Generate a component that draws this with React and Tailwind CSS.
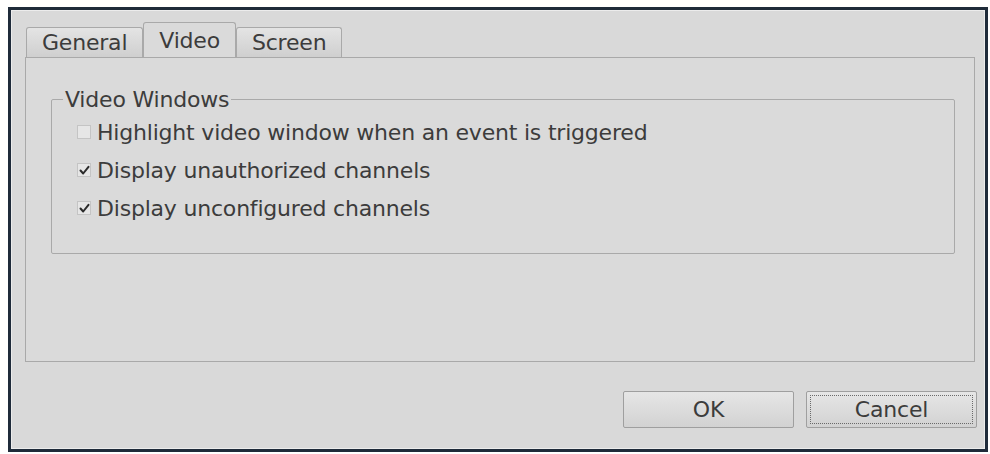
// Settings dialog with tabs: General / Video / Screen
const font = { fontFamily: '"DejaVu Sans", Verdana, sans-serif' };

function CheckBox({ checked }) {
    return (
        <span className="w-[14px] h-[14px] border border-[#c4c4c4] bg-[#e6e6e6] flex items-center justify-center shrink-0">
            {checked && (
                <svg width="11" height="11" viewBox="0 0 11 11" fill="none">
                    <path d="M1.5 5.5 L4.2 8.5 L9.5 1.8" stroke="#2b2b2b" strokeWidth="2" strokeLinecap="round" strokeLinejoin="round" />
                </svg>
            )}
        </span>
    );
}

function Option({ checked, label }) {
    return (
        <div className="flex items-center gap-[6px] h-[38px]">
            <CheckBox checked={checked} />
            <span className="text-[22px] tracking-[-0.2px] text-[#3c3c3c]">{label}</span>
        </div>
    );
}

function Tab({ label, active }) {
    return active ? (
        <div className="h-[35px] px-[15px] flex items-center bg-[#dadada] border border-b-0 border-[#a9a9a9] rounded-t-[3px] -mb-px relative z-10 text-[22px] tracking-[-0.2px] text-[#3c3c3c]">
            {label}
        </div>
    ) : (
        <div className="h-[30px] mt-[5px] px-[15px] flex items-center bg-gradient-to-b from-[#e4e4e4] to-[#cfcfcf] border border-b-0 border-[#a9a9a9] rounded-t-[3px] text-[22px] tracking-[-0.2px] text-[#3c3c3c]">
            {label}
        </div>
    );
}

function Button({ label, focused }) {
    return (
        <button className="w-[171px] h-[37px] bg-gradient-to-b from-[#e6e6e6] to-[#d2d2d2] border border-[#9f9f9f] rounded-[2px] text-[22px] tracking-[-0.2px] text-[#3c3c3c] flex items-center justify-center">
            <span className={focused ? "w-[163px] h-[29px] border border-dotted border-[#6a6a6a] flex items-center justify-center" : ""}>
                {label}
            </span>
        </button>
    );
}

export default function App() {
    return (
        <div className="w-[990px] h-[454px] bg-white pt-[7px] pl-[8px]" style={font}>
            {/* dialog window */}
            <div className="w-[980px] h-[445px] border-[3px] border-[#1f2b3a] bg-[#d9d9d9]">
                <div className="h-full border border-[#ececec] pt-[11px] pl-[13px] pr-[9px] flex flex-col">
                    {/* tab strip */}
                    <div className="flex items-start ml-px">
                        <Tab label="General" />
                        <Tab label="Video" active />
                        <Tab label="Screen" />
                    </div>

                    {/* tab page */}
                    <div className="h-[305px] border border-[#a9a9a9] bg-[#dadada] pt-[25px] pl-[25px] pr-[19px]">
                        <fieldset className="border border-[#a9a9a9] rounded-[2px] pl-[25px] pb-[20px] h-[171px]">
                            <legend className="text-[22px] tracking-[-0.2px] text-[#3c3c3c] px-[2px] -ml-[14px]">Video Windows</legend>
                            <div className="flex flex-col -mt-[3px]">
                                <Option checked={false} label="Highlight video window when an event is triggered" />
                                <Option checked label="Display unauthorized channels" />
                                <Option checked label="Display unconfigured channels" />
                            </div>
                        </fieldset>
                    </div>

                    {/* dialog buttons */}
                    <div className="flex justify-end gap-[12px] mt-[29px] -mr-[2px]">
                        <Button label="OK" />
                        <Button label="Cancel" focused />
                    </div>
                </div>
            </div>
        </div>
    );
}
